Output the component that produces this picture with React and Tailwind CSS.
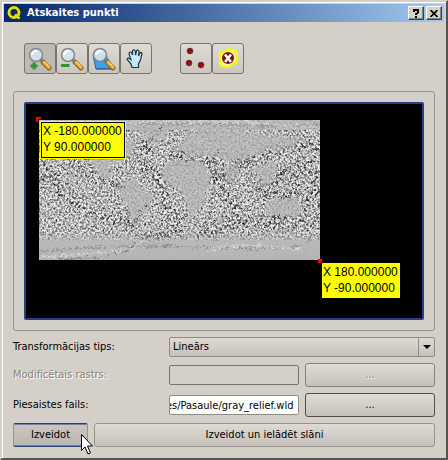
import React, { useState, useRef, useEffect } from 'react';

const FACE = 'bg-gradient-to-b from-[#dedad4] to-[#c6c2bb]';

const Lens = () => (
  <>
    <path d="M15 15 L21 21" stroke="#8a6a30" strokeWidth="5" strokeLinecap="round" />
    <path d="M15.500 15 L21 20.500" stroke="#f3b73c" strokeWidth="3" strokeLinecap="round" />
    <path d="M16.500 14.500 L21 19" stroke="#ffe08a" strokeWidth="1" />
    <circle cx="8" cy="8" r="6.500" fill="#d5e6f3" fillOpacity="0.9" stroke="#858789" strokeWidth="1.500" />
    <path d="M4 8 A4.500 4.500 0 0 1 9 4" stroke="#fff" strokeWidth="2" fill="none" />
    <path d="M12.500 12.500 L15 15" stroke="#77797a" strokeWidth="2" />
  </>
);

const ZoomInIcon = () => (
  <svg width="24" height="24" viewBox="0 0 24 24" aria-hidden="true">
    <Lens />
    <path d="M6 15.500 V22.500 M2.500 19 H9.500" stroke="#2f9433" strokeWidth="3" />
  </svg>
);

const ZoomOutIcon = () => (
  <svg width="24" height="24" viewBox="0 0 24 24" aria-hidden="true">
    <Lens />
    <path d="M1 18.500 H9.500" stroke="#2f9433" strokeWidth="3" />
  </svg>
);

const ZoomLayerIcon = () => (
  <svg width="24" height="24" viewBox="0 0 24 24" aria-hidden="true">
    <path d="M1 7 H14 L22 22 H4 Z" fill="#3ba2e4" />
    <path d="M4 22 H22" stroke="#1c3950" strokeWidth="1" />
    <path d="M1 8 L4 22" stroke="#23618c" strokeWidth="1" />
    <Lens />
  </svg>
);

const HandIcon = () => (
  <svg width="24" height="24" viewBox="0 0 24 24" aria-hidden="true">
    <path
      d="M8 20.500 L7 17 L3.500 13 Q2.500 11 4.500 11 L7 12.500 L5 7 Q5 5 6.500 5 Q8 5 8.500 8 L8.500 4 Q9 2.500 10.500 3 Q11.500 3.500 11.500 8 L12.500 4 Q13.500 2.500 14.500 3.500 Q15.500 4.500 14.500 9 L16 6 Q17.500 4.500 18 6.500 L16.500 13 L14.500 17 L14.500 20.500 Z"
      fill="#b9e9ff"
      stroke="#28333a"
      strokeWidth="1.200"
    />
    <path d="M8 10 L9 14 M11 9 V13 M14 10 L13 14" stroke="#fff" strokeWidth="1" />
  </svg>
);

const PointsIcon = () => (
  <svg width="24" height="24" viewBox="0 0 24 24" aria-hidden="true">
    {[[6, 4], [5, 16], [17, 18]].map(([x, y]) => (
      <g key={`${x}-${y}`}>
        <circle cx={x} cy={y} r="3" fill="#861014" stroke="#5f3535" strokeWidth="0.500" />
        <circle cx={x + 1} cy={y + 1} r="1" fill="#b01a1a" />
      </g>
    ))}
  </svg>
);

const DeletePointIcon = () => (
  <svg width="24" height="24" viewBox="0 0 24 24" aria-hidden="true">
    <path
      d="M5 5 Q9 5 11 3 Q15 1 18 3 Q21 4 20.500 8 Q22 12 20 16 Q16 17 14 19.500 Q9 21 5 19 Q3 17 4 13 Q3 8 5 5 Z"
      fill="#f6f19d"
      stroke="#f8f800"
      strokeWidth="2"
    />
    <circle cx="12" cy="11" r="6" fill="#7b1415" />
    <path d="M9 7.500 L15 15 M15 7.500 L9 15" stroke="#fff" strokeWidth="2.500" />
  </svg>
);

const Logo = () => (
  <svg width="16" height="16" viewBox="0 0 16 16" aria-hidden="true">
    <path d="M8 10 L12.500 14" stroke="#22250c" strokeWidth="5" />
    <circle cx="7" cy="7.500" r="5" fill="none" stroke="#22250c" strokeWidth="4.500" />
    <circle cx="7" cy="7.500" r="5" fill="none" stroke="#d8e01c" strokeWidth="3" />
    <path d="M8 9.500 L12.500 13.500" stroke="#d8e01c" strokeWidth="3" />
  </svg>
);

const LAND = [
  'M20 14 L70 10 L98 24 L90 36 L72 46 L70 60 L58 52 L48 34 L22 26 Z',
  'M82 62 L94 59 L114 76 L110 90 L102 98 L94 110 L91 92 L80 76 Z',
  'M122 52 L128 42 L146 39 L164 42 L172 54 L168 72 L162 88 L152 98 L146 82 L142 70 L128 64 Z',
  'M136 28 L150 12 L178 8 L214 12 L262 18 L252 28 L230 30 L210 38 L190 40 L170 36 L150 38 Z',
  'M184 46 L198 46 L196 60 L190 64 Z',
  'M212 50 L234 42 L240 52 L228 64 L220 60 Z',
  'M226 86 L240 76 L258 78 L262 90 L254 98 L230 97 Z',
  'M100 8 L132 6 L126 18 L112 26 Z',
];

const DENSE = [
  'M112 16 Q96 40 112 50 Q128 62 126 78 Q126 96 144 104 Q120 122 96 118',
  'M134 38 Q158 32 178 42 Q190 56 198 54',
  'M174 54 Q190 74 198 92 Q186 112 158 116',
  'M196 42 Q220 36 240 30 Q262 20 280 28 Q264 48 254 60 Q248 68 262 78',
  'M214 54 Q224 78 254 76 M232 60 Q240 50 246 58',
  'M22 36 Q50 48 70 64 M4 42 Q18 70 36 82 Q50 100 88 98',
  'M198 100 Q230 108 280 98 M266 38 Q280 60 268 90',
];

const RIDGES = [
  'M56 64 L66 58 L72 64 L86 67 M81 76 Q91 84 90 104 M90 104 L96 115 Q120 119 140 114',
  'M108 24 Q96 28 90 36 M122 8 Q114 18 108 24 M78 52 L90 38',
  'M180 32 Q168 42 174 52 Q190 62 200 46 L216 42 L220 46',
  'M218 66 Q222 78 238 78 Q254 78 264 69 L272 72 M222 99 Q240 94 254 99',
  'M240 54 Q258 44 266 34 M248 48 L238 64 M172 82 Q176 94 166 106 M186 67 Q176 70 170 80',
  'M93 106 Q104 88 112 80 M4 54 Q16 60 20 72 M160 36 L148 40 L132 38',
  'M264 134 L270 120 L280 114 M196 42 Q204 46 212 43',
];

const Relief = () => (
  <svg className="block" width="281" height="140" viewBox="0 0 281 140" role="img" aria-label="gray_relief">
    <defs>
      <filter id="grain" x="0" y="0" width="100%" height="100%" colorInterpolationFilters="sRGB">
        <feTurbulence type="fractalNoise" baseFrequency="0.530 0.490" numOctaves="3" seed="7" />
        <feColorMatrix values="2 0.600 0 0 -0.590  2 0.600 0 0 -0.590  2 0.600 0 0 -0.590  0 0 0 0 1" />
      </filter>
      <filter id="coarse" x="0" y="0" width="100%" height="100%" colorInterpolationFilters="sRGB">
        <feTurbulence type="fractalNoise" baseFrequency="0.430 0.390" numOctaves="3" seed="21" />
        <feColorMatrix values="4 1 0 0 -1.850  4 1 0 0 -1.850  4 1 0 0 -1.850  0 0 0 0 1" />
      </filter>
      <filter id="rough" x="0" y="0" width="281" height="140" filterUnits="userSpaceOnUse">
        <feTurbulence type="fractalNoise" baseFrequency="0.300" numOctaves="2" seed="4" result="n" />
        <feDisplacementMap in="SourceGraphic" in2="n" scale="9" xChannelSelector="R" yChannelSelector="G" />
      </filter>
      <filter id="scatter" x="0" y="0" width="281" height="140" filterUnits="userSpaceOnUse" colorInterpolationFilters="sRGB">
        <feGaussianBlur in="SourceGraphic" stdDeviation="2" result="b" />
        <feTurbulence type="fractalNoise" baseFrequency="0.130" numOctaves="4" seed="12" result="n" />
        <feDisplacementMap in="b" in2="n" scale="26" xChannelSelector="R" yChannelSelector="G" />
      </filter>
      <filter id="coast" x="0" y="0" width="281" height="140" filterUnits="userSpaceOnUse" colorInterpolationFilters="sRGB">
        <feGaussianBlur in="SourceGraphic" stdDeviation="1" result="b" />
        <feTurbulence type="fractalNoise" baseFrequency="0.200" numOctaves="3" seed="5" result="n" />
        <feDisplacementMap in="b" in2="n" scale="10" xChannelSelector="R" yChannelSelector="G" />
      </filter>
      <mask id="sea" maskUnits="userSpaceOnUse" x="0" y="0" width="281" height="140">
        <rect y="10" width="281" height="110" fill="#ababab" />
      </mask>
      <mask id="belts" maskUnits="userSpaceOnUse" x="0" y="0" width="281" height="140">
        <g filter="url(#scatter)" fill="none" stroke="#b4b4b4" strokeWidth="9">
          {DENSE.map((d) => <path key={d} d={d} />)}
        </g>
      </mask>
      <linearGradient id="ice" x1="0" y1="0" x2="0" y2="1">
        <stop offset="0" stopColor="#b5b5b5" stopOpacity="0" />
        <stop offset="0.400" stopColor="#b9b9b9" />
        <stop offset="1" stopColor="#b4b4b4" />
      </linearGradient>
    </defs>
    <rect width="281" height="140" fill="#b8b8b8" />
    <rect width="281" height="140" filter="url(#grain)" opacity="0.150" />
    <g mask="url(#sea)">
      <rect width="281" height="140" filter="url(#grain)" />
    </g>
    <g mask="url(#belts)">
      <rect width="281" height="140" filter="url(#coarse)" />
    </g>
    <g filter="url(#coast)" fill="#b6b6b6" opacity="0.720">
      {LAND.map((d) => <path key={d} d={d} />)}
    </g>
    <g filter="url(#rough)" fill="none" stroke="#383838" strokeWidth="1" strokeDasharray="4 2 2 3">
      {RIDGES.map((d) => <path key={d} d={d} />)}
    </g>
    <rect y="112" width="281" height="28" fill="url(#ice)" opacity="0.850" />
    <g filter="url(#rough)" fill="none" strokeWidth="1">
      <path d="M0 132 Q50 126 90 126 T180 128 T262 126" stroke="#8c8c8c" />
      <path d="M0 137 L50 134 L90 130 L104 121 M170 130 Q200 120 262 130" stroke="#e0e0e0" />
      <path d="M20 140 L70 137 M96 122 L90 130 L70 134" stroke="#777" />
      <path d="M100 4 H170 Q220 7 281 5" stroke="#888" />
      <path d="M90 2 H200 L281 8" stroke="#ddd" />
    </g>
  </svg>
);

const Cursor = () => (
  <svg className="pointer-events-none absolute left-[68px] top-[11px] z-10" width="13" height="21" viewBox="0 0 13 21" aria-hidden="true">
    <path d="M0.500 0.500 V16.500 L4 13 L7 20 L9.500 19 L6.500 12 H11.500 Z" fill="#fff" stroke="#000" />
  </svg>
);

const ToolButton = ({ label, active, onClick, children }) => (
  <button
    type="button"
    aria-label={label}
    aria-pressed={active}
    onClick={onClick}
    className={`flex h-[31px] w-8 items-center justify-center rounded-[3px] border border-[#77756f] ${
      active ? 'bg-[#bebab2]' : 'bg-gradient-to-b from-[#dedad4] to-[#cbc7c0]'
    }`}
  >
    {children}
  </button>
);

const TitleButton = ({ label, children }) => (
  <button
    type="button"
    aria-label={label}
    className="flex h-3.5 w-4 items-center justify-center border border-t-white border-l-white border-r-[#404040] border-b-[#404040] bg-[#d4d0c8] shadow-[inset_-1px_-1px_0_#808080]"
  >
    {children}
  </button>
);

const TOOLS = [
  { id: 'in', label: 'Tuvināt', Icon: ZoomInIcon },
  { id: 'out', label: 'Tālināt', Icon: ZoomOutIcon },
  { id: 'layer', label: 'Tuvināt līdz slānim', Icon: ZoomLayerIcon },
  { id: 'pan', label: 'Pārvietot', Icon: HandIcon },
];

const POINT_TOOLS = [
  { id: 'add', label: 'Pievienot punktu', Icon: PointsIcon },
  { id: 'delete', label: 'Dzēst punktu', Icon: DeletePointIcon },
];

const App = () => {
  const [tool, setTool] = useState('in');
  const [worldFile, setWorldFile] = useState('es/Pasaule/gray_relief.wld');
  const fileRef = useRef(null);

  // keep the end of a long path in view
  useEffect(() => {
    if (fileRef.current) fileRef.current.scrollLeft = fileRef.current.scrollWidth;
  }, []);

  const renderTool = ({ id, label, Icon }) => (
    <ToolButton key={id} label={label} active={tool === id} onClick={() => setTool(id)}>
      <Icon />
    </ToolButton>
  );

  return (
    <div className="border-2 border-t-[#d4d0c8] border-l-[#d4d0c8] border-r-[#55534f] border-b-[#55534f] bg-[#d4d0c8] font-['DejaVu_Sans_Condensed','DejaVu_Sans',sans-serif] text-[11px] leading-4 text-black">
      <div className="border-t border-l border-white p-px pb-[11px]">
        <header className="mr-px flex h-[18px] items-center gap-1 bg-gradient-to-r from-[#0a246a] to-[#a6caf0] pl-[3px] pr-0.5">
          <Logo />
          <h1 className="flex-1 text-[11px] font-bold text-white">Atskaites punkti</h1>
          <div className="flex gap-0.5">
            <TitleButton label="Palīdzība">
              <svg width="8" height="9" viewBox="0 0 8 9" aria-hidden="true">
                <path d="M2 3 V1 H6 V3.500 L4 5 V6 M4 7 V9" fill="none" stroke="#000" strokeWidth="2" />
              </svg>
            </TitleButton>
            <TitleButton label="Aizvērt">
              <svg width="8" height="7" viewBox="0 0 8 7" aria-hidden="true">
                <path d="M0.500 0 L7.500 7 M7.500 0 L0.500 7" stroke="#000" strokeWidth="1.700" />
              </svg>
            </TitleButton>
          </div>
        </header>

        <main className="flex flex-col gap-1.5 pl-[9px] pr-[10px]">
          <div className="mt-[21px] mb-[11px] flex gap-7 pl-[11px]">
            <div className="flex">{TOOLS.map(renderTool)}</div>
            <div className="flex">{POINT_TOOLS.map(renderTool)}</div>
          </div>

          <section className="rounded-[3px] border border-[#97948d] p-[10px]">
            <div className="relative h-[218px] overflow-hidden rounded-[2px] border-2 border-[#27407f] bg-black pt-4 pl-[13px]">
              <Relief />
              <span className="absolute left-[10px] top-[13px] size-[5px] border-t-2 border-l-2 border-[#f00]" />
              <div className="absolute left-[15px] top-[18px] border border-black bg-[#ff0] pb-0.5 pl-px pr-0.5 outline outline-[#ff0] font-['Liberation_Sans',Arial,sans-serif] text-[12px] leading-4 whitespace-nowrap">
                <p>X -180.000000</p>
                <p>Y 90.000000</p>
              </div>
              <span className="absolute left-[292px] top-[155px] size-1 bg-[#f00]" />
              <div className="absolute left-[296px] top-[159px] bg-[#ff0] pt-px pb-0.5 pl-px pr-0.5 font-['Liberation_Sans',Arial,sans-serif] text-[12px] leading-4 whitespace-nowrap">
                <p>X 180.000000</p>
                <p>Y -90.000000</p>
              </div>
            </div>
          </section>

          <form className="grid grid-cols-[150px_1fr_1fr] items-center gap-1.5" onSubmit={(e) => e.preventDefault()}>
            <label htmlFor="transform">Transformācijas tips:</label>
            <div className="relative col-span-2">
              <select
                id="transform"
                className={`block h-5 w-full appearance-none rounded-[2px] border border-[#8f8c85] pl-[3px] pr-5 ${FACE}`}
              >
                <option>Lineārs</option>
              </select>
              <span className="pointer-events-none absolute inset-y-0 right-0 flex w-[17px] items-center justify-center border-l border-[#8f8c85]">
                <svg width="8" height="4" viewBox="0 0 8 4" aria-hidden="true">
                  <path d="M0 0 H8 L4 4 Z" fill="#000" />
                </svg>
              </span>
            </div>

            <label htmlFor="raster" className="text-[#85827b] [text-shadow:1px_1px_0_#fff]">Modificētais rastrs:</label>
            <input id="raster" type="text" disabled className="h-5 w-full min-w-0 rounded-[2px] border border-[#77756f] bg-[#d4d0c8]" />
            <button type="button" disabled aria-label="Izvēlēties rastru" className={`h-6 rounded-[3px] border border-[#86837c] text-[#85827b] [text-shadow:1px_1px_0_#fff] ${FACE}`}>
              ...
            </button>

            <label htmlFor="world">Piesaistes fails:</label>
            <input
              id="world"
              ref={fileRef}
              type="text"
              value={worldFile}
              onChange={(e) => setWorldFile(e.target.value)}
              className="h-5 w-full min-w-0 rounded-[2px] border border-[#8f8c85] bg-white pr-[5px]"
            />
            <button type="button" aria-label="Izvēlēties failu" className={`h-6 rounded-[3px] border border-[#504e4a] ${FACE}`}>
              ...
            </button>
          </form>

          <footer className="relative flex gap-1.5">
            <button type="button" className="h-6 w-[75px] rounded-[2px] border border-x-[#97948d] border-y-[#27407f] bg-gradient-to-b from-[#cbc7c0] to-[#bab6af] shadow-[inset_0_1px_0_#6f80aa,inset_0_-1px_0_#6f80aa]">
              Izveidot
            </button>
            <button type="button" className={`h-6 flex-1 rounded-[3px] border border-[#97948d] ${FACE}`}>
              Izveidot un ielādēt slāni
            </button>
            <Cursor />
          </footer>
        </main>
      </div>
    </div>
  );
};

export default App;
